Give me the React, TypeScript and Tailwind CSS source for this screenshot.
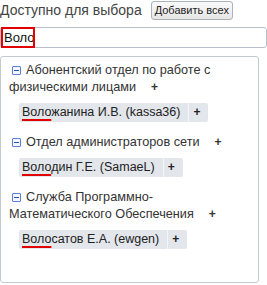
import React from 'react';

interface Person {
    prefix: string;
    rest: string;
}

interface Group {
    title: string;
    people: Person[];
}

const groups: Group[] = [
    { title: 'Абонентский отдел по работе с физическими лицами', people: [{ prefix: 'Воло', rest: 'жанина И.В. (kassa36)' }] },
    { title: 'Отдел администраторов сети', people: [{ prefix: 'Воло', rest: 'дин Г.Е. (SamaeL)' }] },
    { title: 'Служба Программно-Математического Обеспечения', people: [{ prefix: 'Воло', rest: 'сатов Е.А. (ewgen)' }] },
];

const MinusBox = () => (
    <span className="inline-block align-[-1px] ml-[3px] mr-[5px] w-[9px] h-[9px] border border-[#5a7fd8] rounded-[1px] relative bg-[#f4f7ff]">
        <span className="absolute left-[1px] right-[1px] top-[3px] h-[1px] bg-[#2b4fb0]" />
    </span>
);

const Chip: React.FC<Person> = ({ prefix, rest }) => (
    <div className="flex items-center h-[19px] bg-[#e3e6ea] rounded-[2px] text-[12.5px] text-[#222]">
        <span className="pl-[3px] pr-[8px] border-r border-[#f4f5f7] leading-[19px]">
            <span className="underline decoration-[#e00000] decoration-2 underline-offset-[3px]">{prefix}</span>
            {rest}
        </span>
        <span className="pl-[4px] pr-[8px] font-bold text-[12px] leading-[19px]">+</span>
    </div>
);

const GroupBlock: React.FC<Group> = ({ title, people }) => (
    <div className="mb-[12px]">
        <div className="leading-[17px] text-[12.7px] text-[#333]">
            <MinusBox />
            {title}
            <span className="ml-[15px] font-bold text-[12px]">+</span>
        </div>
        <div className="mt-[7px] pl-[10px] flex">
            {people.map(p => <Chip key={p.rest} {...p} />)}
        </div>
    </div>
);

export default function App() {
    return (
        <div className="w-[267px] h-[285px] bg-white font-['Liberation_Sans',Arial,sans-serif] text-[#333] overflow-hidden">
            <div className="flex items-center h-[20px] pt-[1px]">
                <span className="text-[14px] text-[#444]">Доступно для выбора</span>
                <button className="ml-[9px] h-[19px] px-[3px] whitespace-nowrap text-[11px] leading-none text-[#222] bg-gradient-to-b from-[#fafafa] to-[#e6e6e6] border border-[#a9b2bd] rounded-[3px]">Добавить всех</button>
            </div>
            <div className="mt-[7px] h-[21px] border border-[#b8c2cc] rounded-[3px] flex items-center relative">
                <span className="absolute left-0 top-[-1px] bottom-[-1px] w-[34px] border-2 border-[#e00000]" />
                <span className="pl-[3px] text-[13px] text-[#111]">Воло</span>
            </div>
            <div className="mt-[8px] w-[259px] h-[227px] border border-[#c3cad2] rounded-[3px] pt-[5px] pl-[8px] pr-[6px]">
                {groups.map(g => <GroupBlock key={g.title} {...g} />)}
            </div>
        </div>
    );
}
